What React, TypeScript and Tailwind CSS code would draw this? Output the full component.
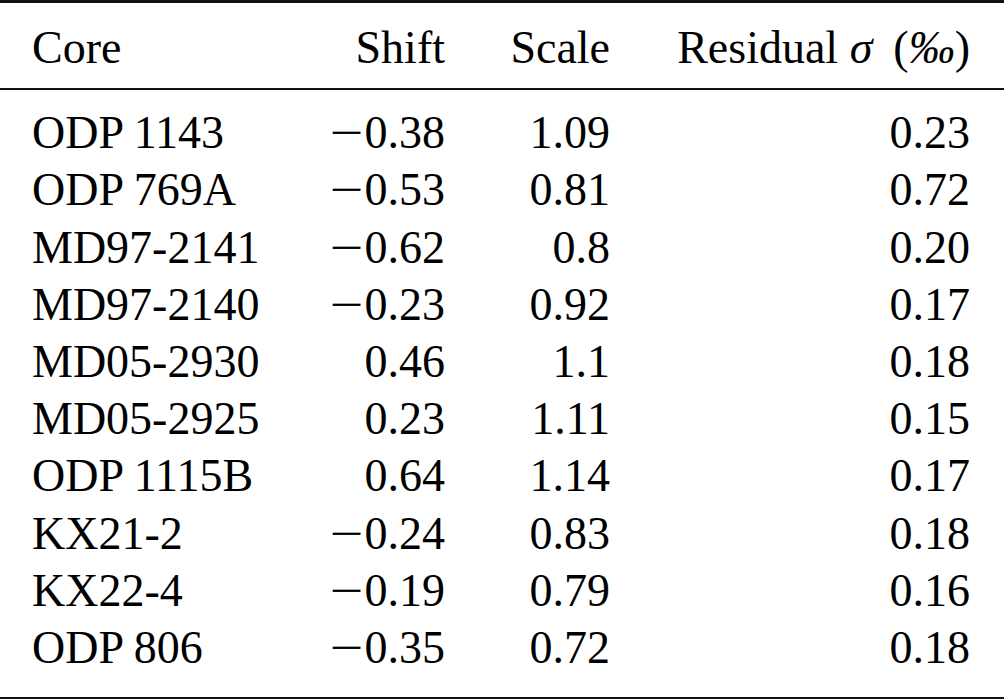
import React from 'react';

interface Row {
  core: string;
  shift: string;
  scale: string;
  sigma: string;
}

const rows: Row[] = [
  { core: 'ODP 1143', shift: '-0.38', scale: '1.09', sigma: '0.23' },
  { core: 'ODP 769A', shift: '-0.53', scale: '0.81', sigma: '0.72' },
  { core: 'MD97-2141', shift: '-0.62', scale: '0.8', sigma: '0.20' },
  { core: 'MD97-2140', shift: '-0.23', scale: '0.92', sigma: '0.17' },
  { core: 'MD05-2930', shift: '0.46', scale: '1.1', sigma: '0.18' },
  { core: 'MD05-2925', shift: '0.23', scale: '1.11', sigma: '0.15' },
  { core: 'ODP 1115B', shift: '0.64', scale: '1.14', sigma: '0.17' },
  { core: 'KX21-2', shift: '-0.24', scale: '0.83', sigma: '0.18' },
  { core: 'KX22-4', shift: '-0.19', scale: '0.79', sigma: '0.16' },
  { core: 'ODP 806', shift: '-0.35', scale: '0.72', sigma: '0.18' },
];

// columns end at 285 / 445 / 610 / 970
const grid = 'grid grid-cols-[253px_160px_165px_360px] pl-[32px] pr-[34px]';

// TeX-style math minus: wider box and a longer bar than the text glyph
function Num({ value }: { value: string }) {
  if (!value.startsWith('-')) return <>{value}</>;
  return (
    <>
      <span className="inline-block w-[36px] text-center">
        <span className="inline-block scale-x-[1.3]">{'\u2212'}</span>
      </span>
      {value.slice(1)}
    </>
  );
}

export default function App() {
  return (
    <div
      className="w-[1004px] h-[699px] bg-white text-black text-[46px] leading-[57.2px] overflow-hidden"
      style={{ fontFamily: '"Liberation Serif", "Times New Roman", serif' }}
    >
      {/* Top rule */}
      <div className="h-[3px] bg-[#111]" />

      {/* Header */}
      <div className={`${grid} pt-[16px] pb-[12px]`}>
        <div>Core</div>
        <div className="text-right">Shift</div>
        <div className="text-right">Scale</div>
        <div className="text-right">
          Residual <span className="italic">σ</span>
          <span className="ml-[21px]">(</span>
          <span className="italic">‰</span>)
        </div>
      </div>

      {/* Mid rule */}
      <div className="h-[2px] bg-[#111]" />

      {/* Body */}
      <div className="pt-[14px] pb-[21px]">
        {rows.map((r) => (
          <div key={r.core} className={grid}>
            <div>{r.core}</div>
            <div className="text-right">
              <Num value={r.shift} />
            </div>
            <div className="text-right">{r.scale}</div>
            <div className="text-right">{r.sigma}</div>
          </div>
        ))}
      </div>

      {/* Bottom rule */}
      <div className="h-[2px] bg-[#111]" />
    </div>
  );
}
